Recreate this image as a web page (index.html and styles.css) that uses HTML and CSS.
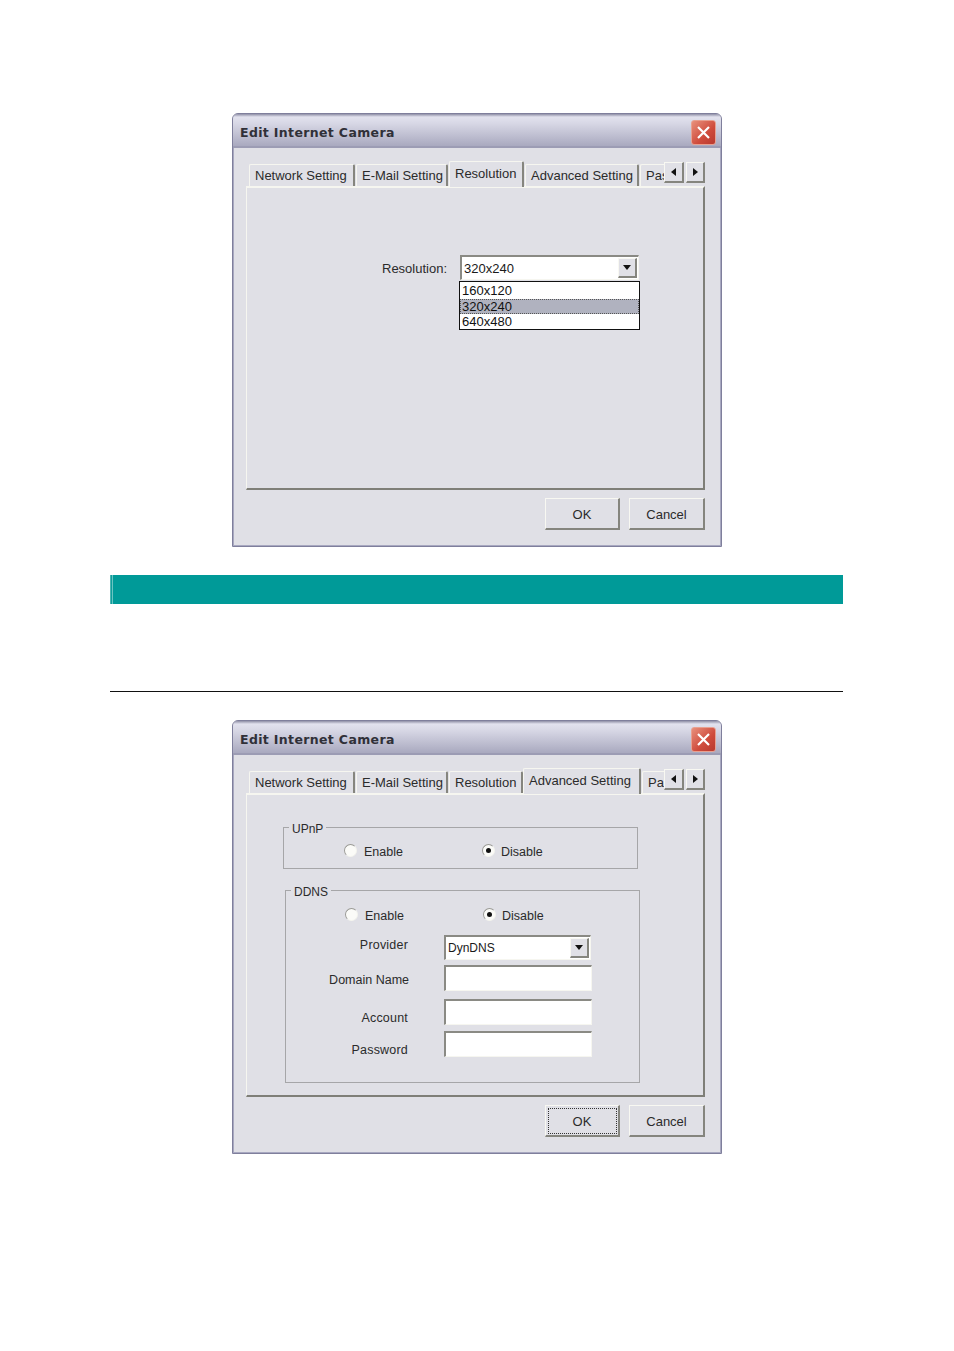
FILE: index.html
```html
<!DOCTYPE html>
<html>
<head>
    <title>Edit Internet Camera</title>
    <link rel="stylesheet" href="styles.css">
</head>
<body>
    <div class="page">
        <div class="dialog">
            <div class="titlebar">
                <span class="title">Edit Internet Camera</span>
                <div class="close-button">
                    <svg width="15" height="15" viewBox="0 0 15 15"><path d="M2 2L13 13M13 2L2 13" stroke="#fff" stroke-width="2.2" fill="none"/></svg>
                </div>
            </div>
            <div class="dialog-body">
                <div class="tabs">
                    <div class="tab tab-network">Network Setting</div>
                    <div class="tab tab-email">E-Mail Setting</div>
                    <div class="tab tab-resolution active">Resolution</div>
                    <div class="tab tab-advanced">Advanced Setting</div>
                    <div class="tab tab-pass">Pas</div>
                    <div class="tab-scroll">
                        <div class="scroll-button"><span class="arrow-left"></span></div>
                        <div class="scroll-button"><span class="arrow-right"></span></div>
                    </div>
                </div>
                <div class="tab-panel panel-resolution">
                    <label class="resolution-label">Resolution:</label>
                    <div class="select select-resolution">
                        <span>320x240</span>
                        <div class="select-button"><span class="arrow-down"></span></div>
                        <div class="select-list">
                            <div class="select-option">160x120</div>
                            <div class="select-option selected">320x240</div>
                            <div class="select-option">640x480</div>
                        </div>
                    </div>
                </div>
                <div class="buttons">
                    <button class="button">OK</button>
                    <button class="button">Cancel</button>
                </div>
            </div>
        </div>

        <div class="band"></div>
        <div class="rule"></div>

        <div class="dialog">
            <div class="titlebar">
                <span class="title">Edit Internet Camera</span>
                <div class="close-button">
                    <svg width="15" height="15" viewBox="0 0 15 15"><path d="M2 2L13 13M13 2L2 13" stroke="#fff" stroke-width="2.2" fill="none"/></svg>
                </div>
            </div>
            <div class="dialog-body">
                <div class="tabs">
                    <div class="tab tab-network">Network Setting</div>
                    <div class="tab tab-email">E-Mail Setting</div>
                    <div class="tab tab-resolution narrow">Resolution</div>
                    <div class="tab tab-advanced active wide">Advanced Setting</div>
                    <div class="tab tab-pass">Pas</div>
                    <div class="tab-scroll">
                        <div class="scroll-button"><span class="arrow-left"></span></div>
                        <div class="scroll-button"><span class="arrow-right"></span></div>
                    </div>
                </div>
                <div class="tab-panel panel-advanced">
                    <fieldset class="group group-upnp">
                        <legend>UPnP</legend>
                        <div class="radio-row">
                            <span class="radio"></span><span class="radio-label">Enable</span>
                            <span class="radio checked"></span><span class="radio-label">Disable</span>
                        </div>
                    </fieldset>
                    <fieldset class="group group-ddns">
                        <legend>DDNS</legend>
                        <div class="radio-row">
                            <span class="radio"></span><span class="radio-label">Enable</span>
                            <span class="radio checked"></span><span class="radio-label">Disable</span>
                        </div>
                        <div class="form-row row-provider">
                            <label>Provider</label>
                            <div class="select select-provider">
                                <span>DynDNS</span>
                                <div class="select-button"><span class="arrow-down"></span></div>
                            </div>
                        </div>
                        <div class="form-row row-domain">
                            <label class="label-domain">Domain Name</label>
                            <div class="input"></div>
                        </div>
                        <div class="form-row row-account">
                            <label>Account</label>
                            <div class="input"></div>
                        </div>
                        <div class="form-row row-password">
                            <label>Password</label>
                            <div class="input"></div>
                        </div>
                    </fieldset>
                </div>
                <div class="buttons">
                    <button class="button focused">OK</button>
                    <button class="button">Cancel</button>
                </div>
            </div>
        </div>
    </div>
</body>
</html>
```

FILE: styles.css
```css
* {
    box-sizing: border-box;
}

body {
    margin: 0;
    background-color: #ffffff;
    font-family: "Liberation Sans", Arial, sans-serif;
    font-size: 13px;
    color: #2b2b2b;
}

.page {
    width: 954px;
    height: 1351px;
    padding: 113px 111px 0 110px;
}

.dialog {
    width: 490px;
    height: 434px;
    margin-left: 122px;
    border: 1px solid #7f7f9c;
    border-radius: 6px 6px 0 0;
    background-color: #e0e0e6;
    display: flex;
    flex-direction: column;
    box-shadow: inset -1px -1px 0 #a8a8c0, inset 1px 0 0 #a8a8c0;
}

.titlebar {
    height: 34px;
    padding: 6px 5px 0 7px;
    display: flex;
    justify-content: space-between;
    border-radius: 5px 5px 0 0;
    border-bottom: 2px solid #9c9cb4;
    background: linear-gradient(#8f8fa6 0, #e2e2ee 3px, #d6d6e4 10px, #a9a9bf 100%);
}

.title {
    font-family: "DejaVu Sans", sans-serif;
    font-weight: bold;
    font-size: 12.5px;
    line-height: 25px;
    letter-spacing: 0.35px;
    color: #303038;
}

.close-button {
    width: 25px;
    height: 25px;
    border: 1px solid #e8a090;
    border-radius: 3px;
    background: linear-gradient(135deg, #e8907c, #cf4b3c 60%, #b8392f);
    display: flex;
    align-items: center;
    justify-content: center;
}

.dialog-body {
    flex: 1;
    padding: 13px 16px 0 13px;
}

.tabs {
    position: relative;
    height: 25px;
    display: flex;
    align-items: flex-end;
    padding-left: 3px;
}

.tab {
    height: 22px;
    padding: 3px 0 0 5px;
    line-height: 16px;
    white-space: nowrap;
    border-top: 1px solid #f6f6f0;
    border-left: 1px solid #f6f6f0;
    border-right: 2px solid #85857e;
    border-radius: 2px 2px 0 0;
    margin-right: 1px;
}

.tab-network { width: 106px; }
.tab-email { width: 92px; }
.tab-resolution { width: 75px; }
.tab-advanced { width: 114px; }
.tab-pass { width: 40px; border-right: none; }

.tab.active {
    height: 26px;
    margin-bottom: -1px;
    padding-top: 4px;
    position: relative;
    z-index: 1;
    background-color: #e0e0e6;
}

.tab-resolution.narrow {
    width: 74px;
    margin-right: 0;
}

.tab-advanced.wide {
    width: 118px;
}

.tab-scroll {
    position: absolute;
    right: 0;
    top: 1px;
    display: flex;
    gap: 2px;
    z-index: 2;
    background-color: #e0e0e6;
}

.scroll-button {
    width: 20px;
    height: 21px;
    border-top: 1px solid #f8f8f2;
    border-left: 1px solid #f8f8f2;
    border-right: 2px solid #85857e;
    border-bottom: 2px solid #85857e;
    background-color: #e0e0e6;
    display: flex;
    align-items: center;
    justify-content: center;
}

.scroll-button:last-child {
    width: 19px;
}

.arrow-left {
    border-top: 4px solid transparent;
    border-bottom: 4px solid transparent;
    border-right: 5px solid #111;
}

.arrow-right {
    border-top: 4px solid transparent;
    border-bottom: 4px solid transparent;
    border-left: 5px solid #111;
}

.arrow-down {
    border-left: 4px solid transparent;
    border-right: 4px solid transparent;
    border-top: 5px solid #111;
}

.tab-panel {
    height: 304px;
    border-top: 2px solid #f6f6f0;
    border-left: 1px solid #f6f6f0;
    border-right: 2px solid #7f7f78;
    border-bottom: 2px solid #7f7f78;
}

.panel-resolution {
    padding: 67px 0 0 135px;
    display: flex;
    align-items: flex-start;
}

.resolution-label {
    width: 65px;
    margin-top: 6px;
    line-height: 16px;
    white-space: nowrap;
}

.select {
    position: relative;
    height: 25px;
    background-color: #ffffff;
    border-top: 2px solid #8a8a84;
    border-left: 2px solid #8a8a84;
    border-bottom: 1px solid #f6f6f0;
    border-right: 1px solid #f6f6f0;
    padding-left: 2px;
    line-height: 23px;
    color: #1a1a1a;
}

.select-resolution {
    width: 179px;
    margin-left: 13px;
}

.select-provider {
    width: 147px;
    font-size: 12px;
}

.select-button {
    position: absolute;
    right: 1px;
    top: 1px;
    width: 19px;
    height: 20px;
    background-color: #e0e0e6;
    border-top: 1px solid #f8f8f2;
    border-left: 1px solid #f8f8f2;
    border-right: 2px solid #85857e;
    border-bottom: 2px solid #85857e;
    display: flex;
    align-items: center;
    justify-content: center;
}

.select-list {
    position: absolute;
    left: -3px;
    top: 24px;
    width: 181px;
    height: 49px;
    padding: 1px 0;
    background-color: #ffffff;
    border: 1px solid #111;
}

.select-option {
    height: 15.6px;
    padding-left: 2px;
    line-height: 15.6px;
    color: #111;
}

.select-option.selected {
    background-color: #b0b2bf;
    outline: 1px dotted #555;
    outline-offset: -1px;
}

.buttons {
    margin-top: 8px;
    display: flex;
    justify-content: flex-end;
    gap: 9px;
}

.button {
    width: 76px;
    height: 32px;
    padding: 2px 0 0 0;
    border-top: 1px solid #f8f8f2;
    border-left: 1px solid #f8f8f2;
    border-right: 2px solid #85857e;
    border-bottom: 2px solid #85857e;
    background-color: #e0e0e6;
    font-family: inherit;
    font-size: 13px;
    color: #2b2b2b;
}

.button:first-child {
    width: 75px;
}

.button.focused {
    outline: 1px dotted #333;
    outline-offset: -4px;
}

.panel-advanced {
    padding: 32px 0 0 36px;
    font-size: 12.5px;
}

.group {
    margin: 0;
    padding: 0;
    border: 1px solid #a6a6a8;
    min-width: 0;
}

.group legend {
    position: relative;
    top: 2px;
    margin-left: 5px;
    padding: 0 3px 0 3px;
    font-size: 12px;
    line-height: 16px;
}

.group-upnp {
    width: 355px;
    height: 50px;
    margin-top: -8px;
}

.group-ddns {
    width: 355px;
    height: 201px;
    margin: 13px 0 0 2px;
}

.radio-row {
    display: flex;
    align-items: center;
    height: 18px;
    padding-left: 60px;
}

.group-upnp .radio-row {
    margin-top: 8px;
}

.group-ddns .radio-row {
    margin-top: 9px;
    padding-left: 59px;
}

.radio {
    position: relative;
    width: 13px;
    height: 13px;
    border-radius: 50%;
    background-color: #fbfbf8;
    border: 1px solid #9a9a96;
    border-right-color: #f4f4ee;
    border-bottom-color: #f4f4ee;
    margin-top: -3px;
}

.radio.checked::after {
    content: "";
    position: absolute;
    left: 3px;
    top: 3px;
    width: 5px;
    height: 5px;
    border-radius: 50%;
    background-color: #111;
}

.radio-label {
    margin-left: 7px;
    width: 118px;
    line-height: 16px;
}

.radio.checked + .radio-label {
    margin-left: 6px;
}

.form-row {
    display: flex;
    align-items: flex-start;
    padding-left: 10px;
}

.form-row label {
    width: 113px;
    padding-right: 1px;
    text-align: right;
    line-height: 16px;
    white-space: nowrap;
    letter-spacing: 0.2px;
}

.form-row .label-domain {
    padding-right: 0;
    letter-spacing: 0;
}

.form-row .select,
.form-row .input {
    margin-left: 35px;
}

.input {
    width: 148px;
    height: 26px;
    background-color: #ffffff;
    border-top: 2px solid #8a8a84;
    border-left: 2px solid #8a8a84;
    border-bottom: 1px solid #f6f6f0;
    border-right: 1px solid #f6f6f0;
}

.row-provider { margin-top: 10px; height: 30px; }
.row-provider label { margin-top: 2px; }
.row-domain { height: 34px; }
.row-domain label { margin-top: 7px; }
.row-account { height: 32px; }
.row-account label { margin-top: 11px; }
.row-password label { margin-top: 11px; }

.band {
    height: 29px;
    margin-top: 28px;
    background: linear-gradient(90deg, #4fb5b3 0, #4fb5b3 1px, #0f9e9c 1px, #0f9e9c 2px, #6cc4c2 2px, #6cc4c2 3px, #009a98 3px);
}

.rule {
    height: 1px;
    margin-top: 87px;
    margin-bottom: 28px;
    background-color: #111;
}
```
